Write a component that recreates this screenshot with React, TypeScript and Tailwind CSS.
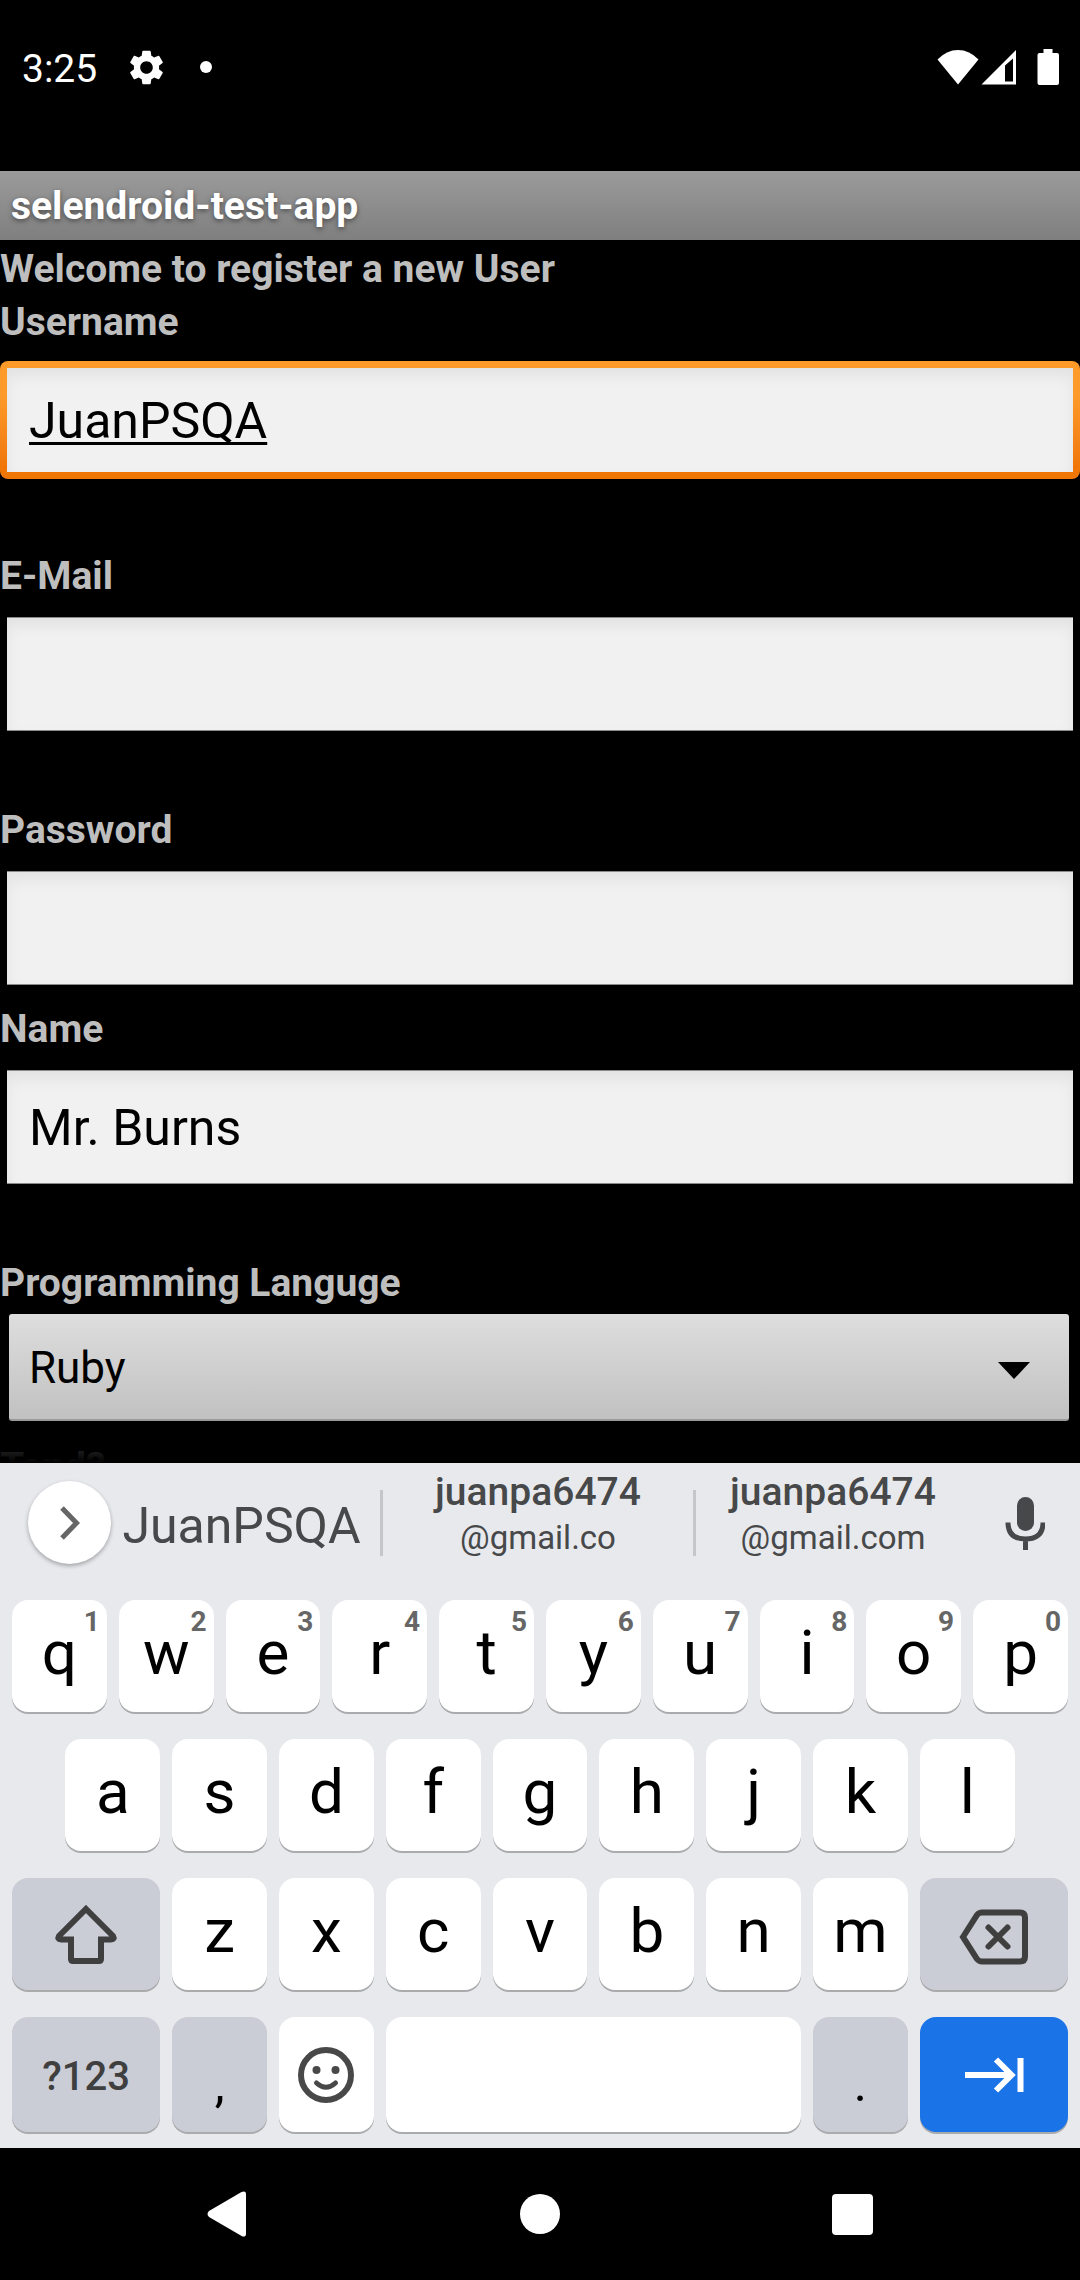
import type { ReactNode } from "react";

const ROBOTO = "font-['Roboto',sans-serif]";

function StatusBar() {
  return (
    <header className="flex h-[171px] shrink-0 items-start bg-black pt-[44px] pr-[21px] pl-[22px] text-white">
      <span className="w-[107px] text-[39px] leading-[51px]">3:25</span>
      <div className="flex h-[46px] flex-1 items-center">
        <svg viewBox="2 2 20 20" className="size-[35px] fill-white" aria-label="Settings">
          <path d="M19.14 12.94c.04-.3.06-.61.06-.94 0-.32-.02-.64-.07-.94l2.03-1.58a.49.49 0 0 0 .12-.61l-1.92-3.32a.488.488 0 0 0-.59-.22l-2.39.96c-.5-.38-1.03-.7-1.62-.94l-.36-2.54a.484.484 0 0 0-.48-.41h-3.84c-.24 0-.43.17-.47.41l-.36 2.54c-.59.24-1.13.57-1.62.94l-2.39-.96c-.22-.08-.47 0-.59.22L2.74 8.87c-.12.21-.08.47.12.61l2.03 1.58c-.05.3-.09.63-.09.94s.02.64.07.94l-2.03 1.58a.49.49 0 0 0-.12.61l1.92 3.32c.12.22.37.29.59.22l2.39-.96c.5.38 1.03.7 1.62.94l.36 2.54c.05.24.24.41.48.41h3.84c.24 0 .44-.17.47-.41l.36-2.54c.59-.24 1.13-.56 1.62-.94l2.39.96c.22.08.47 0 .59-.22l1.92-3.32c.12-.22.07-.47-.12-.61l-2.01-1.58zM12 15.6c-1.98 0-3.6-1.62-3.6-3.6s1.62-3.6 3.6-3.6 3.6 1.62 3.6 3.6-1.62 3.6-3.6 3.6z" />
        </svg>
        <span className="ml-9 size-3 rounded-full bg-white" />
      </div>
      <div className="flex h-[46px] items-center">
        <svg viewBox="0 0 42 36" className="h-[36px] w-[42px] fill-white" aria-label="Wi-Fi">
          <path d="M0.500 10.500Q9.500 1 21 1T41.500 10.500L21 35.500Z" />
        </svg>
        <svg viewBox="0 0 36 36" className="ml-0.5 h-[36px] w-[36px] fill-white" aria-label="Mobile signal">
          <path fillRule="evenodd" d="M0.500 35.500L35 1V35.500ZM24 16.500V32.500H32V9.500Z" />
        </svg>
        <svg viewBox="0 0 22 36" className="ml-5 h-[36px] w-[22px] fill-white" aria-label="Battery">
          <path d="M6.500 0H15.500V4H20Q22 4 22 6V34Q22 36 20 36H2.500Q0.500 36 0.500 34V6Q0.500 4 2.500 4H6.500Z" />
        </svg>
      </div>
    </header>
  );
}

const LABEL = "block h-[53px] text-[39px] leading-[55px] font-bold text-[#bebebe]";

type FieldProps = {
  id: string;
  label: string;
  type?: string;
  value?: string;
  active?: boolean;
};

function Field({ id, label, type = "text", value = "", active = false }: FieldProps) {
  return (
    <div>
      <label htmlFor={id} className={LABEL}>
        {label}
      </label>
      <div
        className={
          active
            ? "mt-[13px] h-[118px] rounded-lg bg-linear-to-b from-[#fd9a28] from-30% to-[#f07606] to-90% p-[7px]"
            : "mt-[13px] h-[118px] px-[7px] py-[2px]"
        }
      >
        <input
          id={id}
          type={type}
          defaultValue={value}
          className={
            active
              ? "block h-full w-full bg-[#f1f1f1] px-[22px] pt-[2px] text-[50px] text-black underline decoration-[3px] underline-offset-[4px] inset-shadow-[0_8px_14px_#e2e2e2] outline-none [text-decoration-skip-ink:none]"
              : "block h-full w-full border-y border-t-[#8a8a8a] border-b-[#8a8a8a] bg-[#f1f1f1] px-[22px] pt-[2px] text-[50px] text-black inset-shadow-[0_8px_14px_#e2e2e2] outline-none"
          }
        />
      </div>
    </div>
  );
}

function RegisterForm() {
  return (
    <main className="relative min-h-0 flex-1 overflow-hidden bg-black">
      <h1 className="h-[69px] bg-linear-to-b from-[#9b9b9b] to-[#7f7f7f] pl-[11px] text-[39px] leading-[71px] font-bold text-white text-shadow-[0_2px_5px_#4a4a4a]">
        selendroid-test-app
      </h1>
      <form className="pt-[2px]">
        <p className={LABEL}>Welcome to register a new User</p>
        <Field id="username" label="Username" value="JuanPSQA" active />
        <div className="h-[70px]" />
        <Field id="email" label="E-Mail" type="email" />
        <div className="h-[70px]" />
        <Field id="password" label="Password" type="password" />
        <div className="h-[15px]" />
        <Field id="name" label="Name" value="Mr. Burns" />
        <div className="h-[70px]" />
        <label htmlFor="language" className={LABEL}>
          Programming Languge
        </label>
        <div className="relative mt-[5px] mr-[11px] mb-[19px] ml-[9px]">
          <select
            id="language"
            defaultValue="Ruby"
            className="block h-[107px] w-full appearance-none rounded-[3px] border-b-2 border-[#9a9a9a] bg-linear-to-b from-[#dedede] to-[#c1c1c1] pt-[3px] pl-[20px] text-[44px] text-black outline-none"
          >
            <option>Ruby</option>
          </select>
          <svg viewBox="0 0 32 17" className="pointer-events-none absolute top-[48px] right-[39px] h-[17px] w-[32px]">
            <path d="M0 0H32L16 17Z" />
          </svg>
        </div>
        <p className={LABEL}>Tand?</p>
      </form>
      <div className="pointer-events-none absolute inset-x-0 bottom-0 h-8 bg-linear-to-b from-black/60 to-black" />
    </main>
  );
}

function MailSuggestion({ name, host }: { name: string; host: string }) {
  return (
    <button type="button" className="flex h-full flex-col items-center pt-[6px] leading-[46px]">
      <span className="text-[39px] font-medium">{name}</span>
      <span className="text-[33px]">{host}</span>
    </button>
  );
}

function Suggestions() {
  return (
    <div className="mb-[18px] grid h-[119px] grid-cols-[111px_269fr_3px_310fr_3px_274fr_110px] items-center text-[#474849]">
      <button
        type="button"
        aria-label="Expand"
        className="ml-7 flex size-[83px] items-center justify-center rounded-full bg-white shadow-[0_2px_4px_rgba(0,0,0,0.3)]"
      >
        <svg viewBox="0 0 20 34" className="h-[34px] w-[20px] fill-none stroke-[#666] stroke-[5px]">
          <path d="M2 2L16.500 17L2 32" />
        </svg>
      </button>
      <button type="button" className="pt-[6px] pr-[8px] text-[50px] leading-[58px]">
        JuanPSQA
      </button>
      <span className="h-[66px] bg-[#c5c6c9]" />
      <MailSuggestion name="juanpa6474" host="@gmail.co" />
      <span className="h-[66px] bg-[#c5c6c9]" />
      <MailSuggestion name="juanpa6474" host="@gmail.com" />
      <button type="button" aria-label="Voice input" className="flex justify-center">
        <svg viewBox="0 0 40 54" className="h-[54px] w-[40px]">
          <rect x="12" y="1" width="17" height="34" rx="8.500" fill="#474849" />
          <path d="M3 26.500Q3 43 20.500 43T38 26.500M20.500 43V54" fill="none" stroke="#474849" strokeWidth="5" />
        </svg>
      </button>
    </div>
  );
}

type KeyProps = {
  children?: ReactNode;
  hint?: string;
  label?: string;
  className?: string;
};

function Key({ children, hint, label, className = "col-span-2 bg-white pb-[6px] text-[62px] text-black" }: KeyProps) {
  return (
    <button
      type="button"
      aria-label={label}
      className={`relative mx-[6px] flex items-center justify-center rounded-2xl leading-none shadow-[0_2px_0_#aaabad] ${className}`}
    >
      {children}
      {hint && (
        <span className="absolute top-[6px] right-[7px] text-[28px] leading-[32px] font-bold text-[#666]">{hint}</span>
      )}
    </button>
  );
}

const ROW = "grid h-[112px] grid-cols-20";

function Keyboard() {
  return (
    <section aria-label="Keyboard" className="flex shrink-0 flex-col bg-[#e8e9ed] pb-[16px]">
      <Suggestions />
      <div className="flex flex-col gap-[27px] px-[6px]">
        <div className={ROW}>
          {"qwertyuiop".split("").map((c, i) => (
            <Key key={c} hint={String((i + 1) % 10)}>
              {c}
            </Key>
          ))}
        </div>
        <div className={ROW}>
          <span />
          {"asdfghjkl".split("").map((c) => (
            <Key key={c}>{c}</Key>
          ))}
        </div>
        <div className={ROW}>
          <Key label="Shift" className="col-span-3 bg-[#cbcdd6]">
            <svg viewBox="0 0 64 60" className="h-[60px] w-[64px] fill-none stroke-[#3f3f40] stroke-[6px]">
              <path d="M32 5L59 32Q61 35.500 57 35.500H47V55Q47 57 45 57H19Q17 57 17 55V35.500H7Q3 35.500 5 32Z" />
            </svg>
          </Key>
          {"zxcvbnm".split("").map((c) => (
            <Key key={c}>{c}</Key>
          ))}
          <Key label="Backspace" className="col-span-3 bg-[#cbcdd6] pt-[5px]">
            <svg
              viewBox="0 0 70 56"
              className="h-[56px] w-[70px] fill-none stroke-[#3f3f40] stroke-[6px]"
              strokeLinecap="round"
            >
              <path d="M4 28L18 6Q20 3.500 23 3.500H61Q66 3.500 66 8.500V47.500Q66 52.500 61 52.500H23Q20 52.500 18 50Z" />
              <path d="M29.500 18.500L48.500 37.500M48.500 18.500L29.500 37.500" />
            </svg>
          </Key>
        </div>
        <div className="grid h-[115px] grid-cols-20">
          <Key className="col-span-3 bg-[#cbcdd6] pt-[4px] text-[40px] font-medium text-[#3f3f40]">?123</Key>
          <Key className="col-span-2 bg-[#cbcdd6] pt-[18px] text-[50px] text-black">,</Key>
          <Key label="Emoji" className="col-span-2 bg-white">
            <svg viewBox="0 0 56 56" className="size-[56px] fill-[#484848]">
              <circle cx="28" cy="28" r="25" fill="none" stroke="#484848" strokeWidth="6" />
              <circle cx="18.500" cy="23" r="4" />
              <circle cx="37.500" cy="23" r="4" />
              <path
                d="M18.500 36Q28 44.500 37.500 36"
                fill="none"
                stroke="#484848"
                strokeWidth="5"
                strokeLinecap="round"
              />
            </svg>
          </Key>
          <Key label="Space" className="col-span-8 bg-white" />
          <Key className="col-span-2 bg-[#cbcdd6] pt-[18px] text-[50px] text-black">.</Key>
          <Key label="Next" className="col-span-3 bg-[#1b73e8]">
            <svg viewBox="0 0 60 36" className="h-[36px] w-[60px] fill-none stroke-white stroke-[6px]">
              <path d="M1 18H47M32 2.500L47.500 18L32 33.500M56.500 1V35" />
            </svg>
          </Key>
        </div>
      </div>
    </section>
  );
}

function NavBar() {
  return (
    <nav className="flex h-[132px] shrink-0 items-center justify-between bg-black px-[207px]">
      <button type="button" aria-label="Back">
        <svg viewBox="0 0 40 46" className="h-[46px] w-[40px] fill-white">
          <path d="M2 20L34.500 1Q39 -0.500 39 3V43Q39 46 35.500 45.500L2 26Q-1 23 2 20Z" />
        </svg>
      </button>
      <button type="button" aria-label="Home" className="size-[40px] rounded-full bg-white" />
      <button type="button" aria-label="Recents" className="size-[41px] rounded-sm bg-white" />
    </nav>
  );
}

export default function App() {
  return (
    <div className={`flex h-screen flex-col overflow-hidden bg-black ${ROBOTO}`}>
      <StatusBar />
      <RegisterForm />
      <Keyboard />
      <NavBar />
    </div>
  );
}
